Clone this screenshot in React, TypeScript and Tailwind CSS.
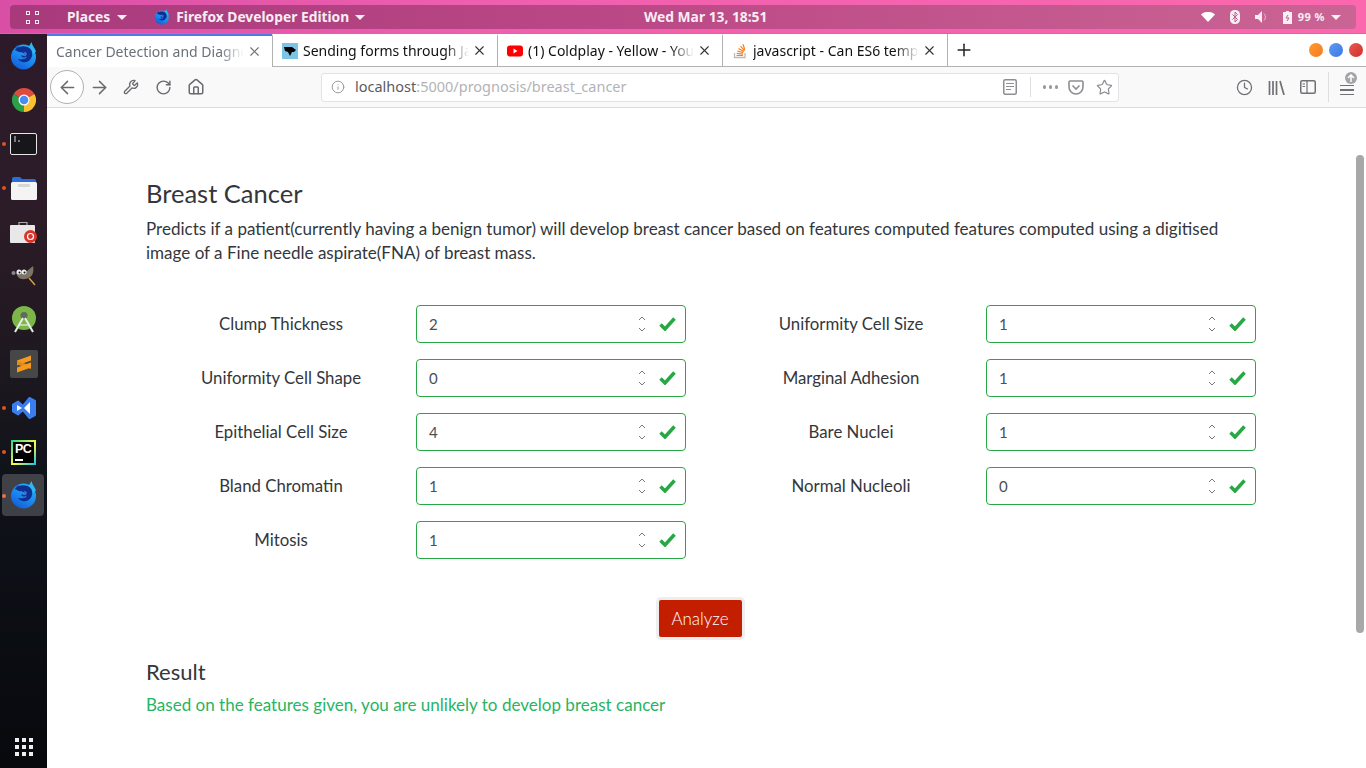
import { ArrowLeft, ArrowRight, Clock, Home, Info, RotateCw, Wrench, X, Plus, Star } from 'lucide-react'

const fields = [
  ['Clump Thickness', '2'],
  ['Uniformity Cell Size', '1'],
  ['Uniformity Cell Shape', '0'],
  ['Marginal Adhesion', '1'],
  ['Epithelial Cell Size', '4'],
  ['Bare Nuclei', '1'],
  ['Bland Chromatin', '1'],
  ['Normal Nucleoli', '0'],
  ['Mitosis', '1'],
]

function FirefoxLogo({ size = 28 }: { size?: number }) {
  return (
    <svg width={size} height={size} viewBox="0 0 28 28">
      <defs>
        <linearGradient id="ffb" x1="0.8" y1="0" x2="0.2" y2="1">
          <stop offset="0" stopColor="#27b4f5" />
          <stop offset="0.55" stopColor="#1a86ee" />
          <stop offset="1" stopColor="#1458d6" />
        </linearGradient>
      </defs>
      <circle cx="13.500" cy="15" r="12.500" fill="url(#ffb)" />
      <path d="M18 6l3.500-6c.5 3 3 5.500 4.500 9.500L22 13z" fill="#2db6f6" />
      <path d="M5 9l2-6 3 3z" fill="#1a5fd0" />
      <path d="M5 7.500C9 3.500 16 3 20 6.500c2.500 2.500 3 6 1.500 9-1.500 3.500-5.500 5.500-9 4.500-2-.5-3.500-1.500-4.500-3 2.500 1 5.500.5 7-1.500-2 .3-3.500-.5-4-2 2 .2 3.500-.5 4.500-2-1.500-.5-3-.3-4-1.500-2 .5-4.500-.5-6.500-2.500z" fill="#0d2f8f" />
      <path d="M13 9.500c2 0 3.500 1 4 2.500-.8 2-2 2.500-3 2.500 1 .5 2 .5 3 0-.5 2-3 3-5 2.500 2.500-.5 3.500-2 3-3-1 .3-2 0-2.500-.8 1.300 0 2.300-.7 2.500-1.700-.5-1-1.200-1.700-2-2.500z" fill="#3f74d8" />
    </svg>
  )
}

function Chrome() {
  return (
    <svg width="24" height="24" viewBox="0 0 24 24">
      <path d="M12 12 L1.600 6 A12 12 0 0 1 22.400 6 Z" fill="#dd4b3e" />
      <path d="M12 12 L22.400 6 A12 12 0 0 1 12 24 Z" fill="#fbc02d" />
      <path d="M12 12 L12 24 A12 12 0 0 1 1.600 6 Z" fill="#2e9e49" />
      <circle cx="12" cy="12" r="5.500" fill="#fff" />
      <circle cx="12" cy="12" r="4.300" fill="#4c8bf0" />
    </svg>
  )
}

function Terminal() {
  return (
    <svg width="27" height="22" viewBox="0 0 27 22">
      <rect x="0.500" y="0.500" width="26" height="21" rx="1.500" fill="#16161b" stroke="#e6e6e6" />
      <path d="M4 4h2M4 6h2M4 8h2M8 8h2" stroke="#ddd" strokeWidth="1" />
    </svg>
  )
}

function Files() {
  return (
    <svg width="26" height="24" viewBox="0 0 26 24">
      <path d="M1 3a2 2 0 0 1 2-2h6l2 2h12a2 2 0 0 1 2 2v5H1z" fill="#2a6fd8" />
      <rect x="0" y="6" width="26" height="18" rx="1.500" fill="#f4f4f4" />
      <rect x="7" y="8" width="12" height="3" rx="1" fill="#d6d6d6" />
    </svg>
  )
}

function Software() {
  return (
    <svg width="27" height="23" viewBox="0 0 27 23">
      <path d="M9 4V1.500h8V4" fill="none" stroke="#aaa" strokeWidth="1.200" />
      <rect x="0" y="4" width="25" height="18" rx="1" fill="#e8e8e8" />
      <circle cx="20.500" cy="15.500" r="6.500" fill="#d8342c" />
      <circle cx="20.500" cy="15.500" r="3" fill="none" stroke="#fff" strokeWidth="1.200" />
    </svg>
  )
}

function Gimp() {
  return (
    <svg width="26" height="22" viewBox="0 0 26 22">
      <path d="M5 8c4-3 8-3 11-2l6-5c1 5 0 9-3 11-4 3-9 3-12 0z" fill="#7d7468" />
      <circle cx="2.500" cy="8" r="2" fill="#888" />
      <circle cx="8" cy="7" r="2.500" fill="#eee" />
      <circle cx="13" cy="7" r="2.500" fill="#eee" />
      <circle cx="8.500" cy="7.500" r="1" fill="#111" />
      <circle cx="13.500" cy="7.500" r="1" fill="#111" />
      <path d="M18 13l6 7" stroke="#d8a13a" strokeWidth="1.500" />
    </svg>
  )
}

function AndroidStudio() {
  return (
    <svg width="26" height="28" viewBox="0 0 26 28">
      <circle cx="13" cy="12" r="12" fill="#7cb548" />
      <circle cx="13" cy="9.500" r="3.500" fill="#5f6b5f" />
      <path d="M12 12L4 26M14 12l8 14" stroke="#e8ede6" strokeWidth="2" />
      <path d="M7.500 19h11" stroke="#e8ede6" strokeWidth="1.200" />
    </svg>
  )
}

function Sublime() {
  return (
    <div className="w-[28px] h-[28px] rounded-[2px] bg-[#474747] flex items-center justify-center">
      <svg width="16" height="20" viewBox="0 0 16 20">
        <path d="M1 6.500L15 1.500v5L1 11.500z" fill="#f59a1e" />
        <path d="M1 7l14 4.500V15L1 10.500z" fill="#e08a18" />
        <path d="M1 13.500L15 8.500v5L1 18.500z" fill="#f59a1e" />
      </svg>
    </div>
  )
}

function VSCode() {
  return (
    <svg width="26" height="24" viewBox="0 0 26 24">
      <path d="M2 8.500L7 5.500l5 4.500 6.500-8L24 5v14l-5.500 3-6.500-8-5 4.500-5-3z" fill="#3b7cf0" stroke="#3b7cf0" strokeWidth="2" strokeLinejoin="round" />
      <path d="M6 9l5 3-5 3zM19 6v12l-6-6z" fill="#fff" />
    </svg>
  )
}

function PyCharm() {
  return (
    <div className="w-[25px] h-[25px] bg-[linear-gradient(135deg,#21d789,#fcf84a_55%,#07c3f2)] p-[2px]">
      <div className="w-full h-full bg-black flex flex-col justify-between px-[2px] pt-[1px] pb-[2px]">
        <span className="font-['Liberation_Sans',sans-serif] font-bold text-[12.500px] leading-[12px] tracking-[-0.500px] text-white">PC</span>
        <span className="block w-[8px] h-[1.500px] bg-white" />
      </div>
    </div>
  )
}

function Grid9() {
  return (
    <div className="grid grid-cols-3 gap-[3px]">
      {Array.from({ length: 9 }).map((_, i) => (
        <span key={i} className="w-[4px] h-[4px] bg-[#eee]" />
      ))}
    </div>
  )
}

function DockSlot({ children, running }: { children: React.ReactNode; running?: boolean }) {
  return (
    <div className="h-[44px] relative flex items-center justify-center">
      {running && <span className="absolute left-[2px] top-1/2 -mt-[2px] w-[4px] h-[4px] rounded-full bg-[#e2521d]" />}
      {children}
    </div>
  )
}

function Dock() {
  return (
    <div className="relative w-[47px] flex-none flex flex-col items-stretch bg-[linear-gradient(180deg,#2c1a2a_0%,#2c1c28_25%,#1d1820_45%,#0f1219_62%,#07090d_100%)]">
      <DockSlot><FirefoxLogo /></DockSlot>
      <DockSlot><Chrome /></DockSlot>
      <DockSlot running><Terminal /></DockSlot>
      <DockSlot running><Files /></DockSlot>
      <DockSlot><Software /></DockSlot>
      <DockSlot><Gimp /></DockSlot>
      <DockSlot><AndroidStudio /></DockSlot>
      <DockSlot><Sublime /></DockSlot>
      <DockSlot running><VSCode /></DockSlot>
      <DockSlot running><PyCharm /></DockSlot>
      <DockSlot running>
        <div className="absolute left-[2px] top-[0px] w-[42px] h-[42px] rounded-[4px] bg-white/20" />
        <span className="relative -mt-[2px]"><FirefoxLogo /></span>
      </DockSlot>
      <div className="mt-auto mb-[12px] flex justify-center"><Grid9 /></div>
    </div>
  )
}

function TopBar() {
  return (
    <div className="h-[34px] flex-none px-[10px] pt-[5px] bg-[linear-gradient(90deg,#d94fa6_0%,#ee5fae_35%,#fb68ae_100%)] border-b-[1px] border-[#e95ca8]">
      <div className="h-[24px] rounded-[4px] bg-[linear-gradient(90deg,#a83a7c,#bb4886_45%,#ca6494)] flex items-center font-['Noto_Sans',sans-serif] font-bold text-[13.800px] text-[#f6eef3] relative">
        <div className="ml-[16px] grid grid-cols-2 gap-x-[5px] gap-y-[5px]">
          {[0, 1, 2, 3].map((i) => (
            <span key={i} className="w-[4px] h-[4px] border-[1px] border-[#f6eef3]" />
          ))}
        </div>
        <span className="ml-[28px]">Places</span>
        <span className="ml-[7px] w-0 h-0 border-x-[5px] border-x-transparent border-t-[5px] border-t-[#f6eef3]" />
        <span className="ml-[27px]"><FirefoxLogo size={16} /></span>
        <span className="ml-[6px]">Firefox Developer Edition</span>
        <span className="ml-[6px] w-0 h-0 border-x-[5px] border-x-transparent border-t-[5px] border-t-[#f6eef3]" />
        <span className="absolute left-[634px]">Wed Mar 13, 18:51</span>
        <div className="ml-auto mr-[15px] flex items-center">
          <svg width="14" height="10" viewBox="0 0 14 10"><path d="M0 2.500C4-1 10-1 14 2.500L7 10z" fill="#fff" /></svg>
          <svg className="ml-[15px]" width="10" height="14" viewBox="0 0 10 14">
            <rect width="10" height="14" rx="4.500" fill="#f6eef3" />
            <path d="M2.500 4.500l5 5-2.500 2.500V2l2.500 2.500-5 5" fill="none" stroke="#c25c90" />
          </svg>
          <svg className="ml-[15px]" width="13" height="12" viewBox="0 0 13 12">
            <path d="M0 4h3l4-4v12L3 8H0z" fill="#f6eef3" />
            <path d="M9 2.500a5 5 0 0 1 0 7" fill="none" stroke="#e7b7d0" />
          </svg>
          <svg className="ml-[15px]" width="9" height="13" viewBox="0 0 9 13">
            <path d="M3 0h3v1h3v12H0V1h3z" fill="#f6eef3" />
            <path d="M5 4L3 7h3l-2 3" fill="none" stroke="#c25c90" />
          </svg>
          <span className="ml-[6px] text-[11px] tracking-[0.500px]">99 %</span>
          <span className="ml-[6px] w-0 h-0 border-x-[5px] border-x-transparent border-t-[5px] border-t-[#f6eef3]" />
        </div>
      </div>
    </div>
  )
}

function Tab({ title, icon, active }: { title: string; icon?: React.ReactNode; active?: boolean }) {
  return (
    <div className={`w-[225px] h-full flex items-center pl-[9px] pb-[1px] border-t-2 ${active ? 'border-[#4a7be8] bg-white' : 'border-t-transparent border-l-[1px] border-l-[#b1b1b3] border-b-[1px] border-b-[#b1b1b3]'}`}>
      {icon && <span className="mr-[5px] flex-none">{icon}</span>}
      <span className={`flex-1 min-w-0 whitespace-nowrap overflow-hidden text-[14px] [mask-image:linear-gradient(90deg,#000_calc(100%_-_24px),transparent)] ${active ? 'text-[#6b7178]' : 'text-[#111]'}`}>
        {title}
      </span>
      <X size={15} strokeWidth={1.800} className={`flex-none ml-[3px] mr-[10px] ${active ? 'text-[#6b7178]' : 'text-[#333]'}`} />
    </div>
  )
}

function TabStrip() {
  return (
    <div className="h-[33px] flex-none flex bg-white font-['Noto_Sans',sans-serif]">
      <Tab active title="Cancer Detection and Diagnosis" />
      <Tab
        title="Sending forms through JavaScript"
        icon={
          <svg width="16" height="16" viewBox="0 0 16 16">
            <rect width="16" height="16" fill="#7cc4e6" />
            <path d="M2 4h8l4 3-2 2h-2l-2 4-2-4-3-1z" fill="#000" />
          </svg>
        }
      />
      <Tab
        title="(1) Coldplay - Yellow - YouTube"
        icon={
          <svg width="16" height="16" viewBox="0 0 16 16">
            <rect y="2.500" width="16" height="11" rx="3" fill="#f00" />
            <path d="M6.500 5.500l4 2.500-4 2.500z" fill="#fff" />
          </svg>
        }
      />
      <Tab
        title="javascript - Can ES6 template literals"
        icon={
          <svg width="16" height="16" viewBox="0 0 16 16">
            <path d="M2.500 10v4.500h10.500V10" fill="none" stroke="#bcbbbb" strokeWidth="1.300" />
            <path d="M4.500 12.500h6.500M4.700 10.300l6.300.8M5.300 8l6 1.600M6.500 5.500l5.400 3M8.500 3.200l4 4.500M11 1.300l1.800 5.500" stroke="#f48024" strokeWidth="1.200" />
          </svg>
        }
      />
      <div className="flex-1 flex items-center border-l-[1px] border-[#b1b1b3] border-b-[1px] border-b-[#b1b1b3]">
        <Plus size={20} strokeWidth={1.800} className="ml-[6px] text-[#222]" />
        <div className="ml-auto mr-[3px] flex gap-[6px]">
          <span className="w-[14px] h-[14px] rounded-full bg-[linear-gradient(135deg,#ff9a2e,#f67a24)]" />
          <span className="w-[14px] h-[14px] rounded-full bg-[linear-gradient(135deg,#5a9bf4,#3f78e0)]" />
          <span className="w-[14px] h-[14px] rounded-full bg-[linear-gradient(135deg,#e85a50,#cf2f2c)]" />
        </div>
      </div>
    </div>
  )
}

function Toolbar() {
  const c = 'text-[#6a6a6f]'
  return (
    <div className="h-[41px] flex-none flex items-center bg-[#f9f9fa] border-b-[1px] border-[#dcdcde] relative">
      <div className="ml-[3px] w-[34px] h-[34px] rounded-full border-[1px] border-[#b1b1b3] bg-white flex items-center justify-center">
        <ArrowLeft size={21} strokeWidth={1.700} className={c} />
      </div>
      <ArrowRight size={21} strokeWidth={1.700} className={`ml-[5px] ${c}`} />
      <Wrench size={16} strokeWidth={2} className={`ml-[13px] ${c}`} />
      <RotateCw size={17} strokeWidth={2} className={`ml-[16px] ${c}`} />
      <Home size={18} strokeWidth={2} className={`ml-[15px] ${c}`} />
      <div className="ml-[116px] w-[798px] h-[29px] rounded-[3px] bg-white border-[1px] border-[#e3e3e5] flex items-center font-['Noto_Sans',sans-serif] text-[14.500px]">
        <Info size={14} strokeWidth={1.500} className="ml-[9px] text-[#8e8e93]" />
        <span className="ml-[10px] text-[#5b5b60]">localhost</span>
        <span className="text-[#b3b3b6]">:5000/prognosis/breast_cancer</span>
        <div className="ml-auto flex items-center text-[#8e8e93]">
          <svg width="14" height="16" viewBox="0 0 14 16" fill="none" stroke="currentColor" strokeWidth="1.500">
            <rect x="0.750" y="0.750" width="12.500" height="14.500" rx="1.500" />
            <path d="M3 4.500h8M3 7.500h8M3 10.500h5" strokeWidth="1" />
          </svg>
          <span className="ml-[13px] w-px h-[20px] bg-[#dedee0]" />
          <span className="ml-[12px] flex gap-[2.500px]">
            {[0, 1, 2].map((i) => <span key={i} className="w-[3.500px] h-[3.500px] rounded-full bg-[#9a9a9e]" />)}
          </span>
          <svg className="ml-[10px]" width="16" height="15" viewBox="0 0 16 15" fill="none" stroke="currentColor" strokeWidth="1.600">
            <path d="M1 2a1 1 0 0 1 1-1h12a1 1 0 0 1 1 1v5a7 7 0 0 1-14 0z" />
            <path d="M4.500 5.500L8 9l3.500-3.500" />
          </svg>
          <Star size={17} strokeWidth={1.700} className="ml-[12px] mr-[5px]" />
        </div>
      </div>
      <div className="ml-[117px] flex items-center text-[#707075]">
        <Clock size={17} strokeWidth={1.800} />
        <svg className="ml-[15px]" width="17" height="15" viewBox="0 0 17 15" fill="none" stroke="currentColor" strokeWidth="1.700">
          <path d="M1.500 1v14M5 1v14M8.500 1v14M12 1l4 14" />
        </svg>
        <svg className="ml-[15px]" width="16" height="14" viewBox="0 0 16 14" fill="none" stroke="currentColor" strokeWidth="1.500">
          <rect x="0.750" y="0.750" width="14.500" height="12.500" rx="1.500" />
          <path d="M7 1v12M2.500 4H5M2.500 6.500H5" strokeWidth="1.200" />
        </svg>
        <span className="ml-[12px] w-px h-[30px] bg-[#dedee0]" />
      </div>
      <div className="ml-[11px] relative w-[14px] flex flex-col gap-[3px] mt-[6px]">
        {[0, 1, 2].map((i) => <span key={i} className="h-[1.500px] bg-[#707075]" />)}
        <span className="absolute -top-[13px] left-[5px] w-[12px] h-[12px] rounded-full bg-[#a4a4a8] flex items-center justify-center text-white">
          <svg width="8" height="8" viewBox="0 0 8 8" fill="none" stroke="currentColor" strokeWidth="1.500"><path d="M4 8V1M1 4l3-3 3 3" /></svg>
        </span>
      </div>
    </div>
  )
}

function NumberField({ value }: { value: string }) {
  return (
    <div className="w-[270px] h-[38px] flex-none rounded-[4px] border-[1px] border-[#28a745] bg-white flex items-center pl-[12px] pr-[9px]">
      <span className="flex-1 text-[15px] text-[#495057]">{value}</span>
      <svg width="8" height="16" viewBox="0 0 8 16" fill="none" stroke="#77777c" strokeWidth="1">
        <path d="M1 4l3-3 3 3M1 12l3 3 3-3" />
      </svg>
      <svg className="ml-[13px]" width="17" height="14" viewBox="0 0 17 14" fill="none" stroke="#28a745" strokeWidth="3.500">
        <path d="M1.500 7.500l4.500 4.500L15.500 1.500" />
      </svg>
    </div>
  )
}

export default function App() {
  return (
    <div className="w-[1366px] h-[768px] overflow-hidden flex flex-col">
      <TopBar />
      <div className="flex-1 min-h-0 flex">
        <Dock />
        <div className="flex-1 min-w-0 flex flex-col bg-white">
          <TabStrip />
          <Toolbar />
          <div className="flex-1 min-h-0 relative font-['Lato',sans-serif] text-[#33373b]">
            <div className="absolute right-[2px] top-[47px] w-[8px] h-[478px] rounded-[4px] bg-[#a8a8a8]" />
            <div className="ml-[99px] w-[1110px] pt-[71px]">
              <h1 className="text-[25.500px] leading-[29px]">Breast Cancer</h1>
              <p className="mt-[9px] text-[17.050px] leading-[24px]">
                Predicts if a patient(currently having a benign tumor) will develop breast cancer based on features computed features computed using a digitised image of a Fine needle aspirate(FNA) of breast mass.
              </p>
              <div className="mt-[40px] grid grid-cols-2 gap-x-[30px] gap-y-[16px] text-[16.800px]">
                {fields.map(([label, value]) => (
                  <div key={label} className="flex items-center">
                    <span className="flex-1 text-center">{label}</span>
                    <NumberField value={value} />
                  </div>
                ))}
              </div>
              <div className="mt-[41px] flex justify-center">
                <button className="w-[83px] h-[37px] mr-[2px] rounded-[2px] bg-[#c41e00] font-light text-white text-[17px] shadow-[0_0_0_3px_#eeeeee]">
                  Analyze
                </button>
              </div>
              <h2 className="mt-[21px] text-[22px] leading-[28px]">Result</h2>
              <p className="mt-[7px] text-[17.050px] leading-[24px] text-[#28b463]">
                Based on the features given, you are unlikely to develop breast cancer
              </p>
            </div>
          </div>
        </div>
      </div>
    </div>
  )
}
